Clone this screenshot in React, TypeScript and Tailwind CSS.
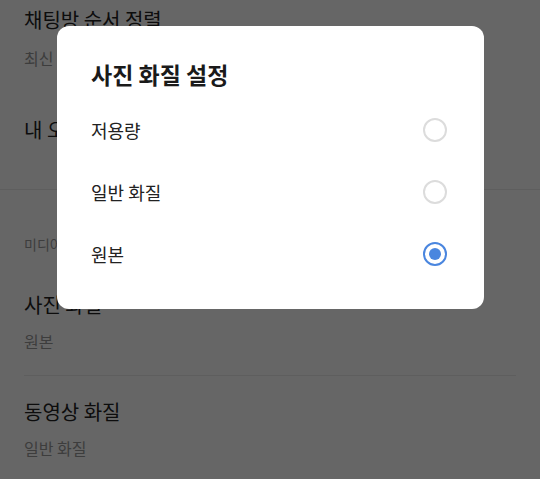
import React from "react";

const FONT = { fontFamily: '"Noto Sans CJK KR", "Noto Sans", sans-serif' };

const options = [
  { label: "저용량", checked: false },
  { label: "일반 화질", checked: false },
  { label: "원본", checked: true },
];

export default function App() {
  return (
    <div className="relative w-[540px] h-[479px] overflow-hidden bg-white" style={FONT}>
      {/* Settings page underneath */}
      <div className="-mt-[16px] flex flex-col">
        <div className="px-6 pt-[22px] pb-[22px]">
          <div className="text-[20px] leading-[28px] text-[#222]">채팅방 순서 정렬</div>
          <div className="mt-[12px] text-[16px] leading-[24px] text-[#999]">최신 메시지 순</div>
        </div>
        <div className="px-6 pt-[24px] pb-[45px]">
          <div className="text-[20px] leading-[28px] text-[#222]">내 오픈채팅 프로필 관리</div>
        </div>
        <div className="h-px bg-[#ececec]" />
        <div className="px-6 pt-[44px] pb-[15px] text-[14px] leading-[20px] text-[#999]">미디어</div>
        <SettingRow title="사진 화질" value="원본" />
        <div className="mx-6 h-px bg-[#ececec]" />
        <SettingRow title="동영상 화질" value="일반 화질" />
      </div>

      {/* Dim overlay + dialog */}
      <div className="absolute inset-0 bg-black/60 pt-[26px] pl-[57px]">
        <div className="w-[427px] h-[283px] rounded-[12px] bg-white">
          <div className="pl-[34px] pt-[33px] mb-[9px] text-[23px] leading-[31px] font-bold text-[#1a1a1a]">
            사진 화질 설정
          </div>
          {options.map((o) => (
            <div key={o.label} className="h-[62px] flex items-center justify-between pl-[34px] pr-[37px]">
              <span className="text-[18px] text-[#222]">{o.label}</span>
              <Radio checked={o.checked} />
            </div>
          ))}
        </div>
      </div>
    </div>
  );
}

function SettingRow({ title, value }: { title: string; value: string }) {
  return (
    <div className="px-6 py-[22px]">
      <div className="text-[20px] leading-[28px] text-[#222]">{title}</div>
      <div className="mt-[10px] text-[16px] leading-[24px] text-[#999]">{value}</div>
    </div>
  );
}

function Radio({ checked }: { checked: boolean }) {
  if (checked) {
    return (
      <div className="w-6 h-6 rounded-full border-[2.5px] border-[#4a86df] flex items-center justify-center">
        <div className="w-[12px] h-[12px] rounded-full bg-[#4a86df]" />
      </div>
    );
  }
  return <div className="w-6 h-6 rounded-full border-2 border-[#dcdcdc]" />;
}
